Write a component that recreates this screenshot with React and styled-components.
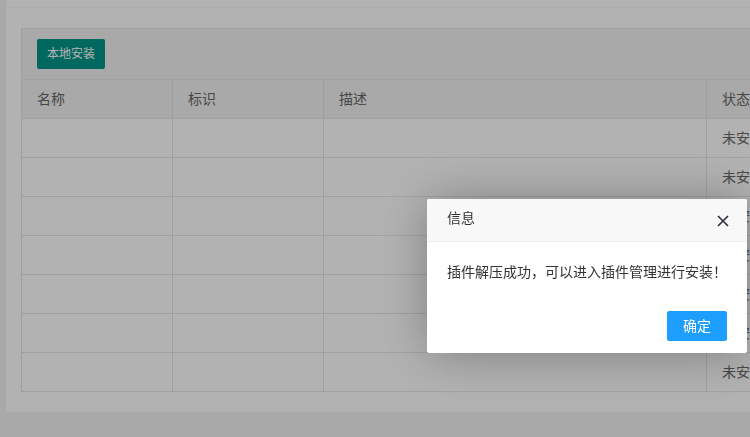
import React from "react";
import styled, { createGlobalStyle } from "styled-components";

const Global = createGlobalStyle`
  html, body { margin: 0; padding: 0; }
  body {
    background: #f2f2f2;
    font-family: "Helvetica Neue", Helvetica, "Noto Sans CJK SC", Arial, sans-serif;
    font-size: 14px;
    color: #333;
    overflow: hidden;
    width: 750px;
    height: 437px;
  }
`;

const Page = styled.div`
  padding: 0 0 0 6px;
  width: 1000px;
`;

const Card = styled.div`
  background: #fff;
  border-radius: 2px;
`;

const CardHead = styled.div`
  height: 7px;
  border-bottom: 1px solid #f6f6f6;
`;

const CardBody = styled.div`
  padding: 20px 15px;
`;

const TableBox = styled.div`
  border: 1px solid #e6e6e6;
`;

const Toolbar = styled.div`
  height: 30px;
  padding: 10px 15px;
  background: #f2f2f2;
  border-bottom: 1px solid #e6e6e6;
`;

const GreenButton = styled.button`
  display: block;
  height: 30px;
  padding: 0 10px;
  border: none;
  border-radius: 2px;
  background: #009688;
  color: #fff;
  font-family: inherit;
  font-size: 12px;
  line-height: 30px;
  cursor: pointer;
`;

const Grid = styled.div`
  display: grid;
  grid-template-columns: 150px 151px 383px 200px;
`;

const Cell = styled.div`
  box-sizing: border-box;
  padding: 9px 15px;
  line-height: 20px;
  color: #666;
  font-size: 14px;
  white-space: nowrap;
  overflow: hidden;
  background: ${(p) => (p.$head ? "#f2f2f2" : "#fff")};
  border-left: ${(p) => (p.$first ? "none" : "1px solid #e6e6e6")};
  border-top: ${(p) => (p.$top ? "none" : "1px solid #e6e6e6")};
  height: ${(p) => (p.$top ? "38px" : "39px")};
`;

const Shade = styled.div`
  position: fixed;
  inset: 0;
  background: rgba(0, 0, 0, 0.3);
`;

const Dialog = styled.div`
  position: fixed;
  left: 427px;
  top: 199px;
  width: 320px;
  background: #fff;
  border-radius: 2px;
  box-shadow: 1px 1px 50px rgba(0, 0, 0, 0.3);
`;

const DialogTitle = styled.div`
  height: 42px;
  line-height: 38px;
  padding: 0 80px 0 20px;
  border-bottom: 1px solid #eee;
  background: #f8f8f8;
  border-radius: 2px 2px 0 0;
  color: #333;
  font-size: 14px;
  position: relative;
`;

const Close = styled.svg`
  position: absolute;
  right: 18px;
  top: 16px;
  display: block;
`;

const DialogContent = styled.div`
  padding: 18px 20px 22px;
  line-height: 24px;
  font-size: 14px;
  color: #333;
`;

const DialogBtns = styled.div`
  display: flex;
  justify-content: flex-end;
  padding: 0 15px 12px;
`;

const BlueButton = styled.a`
  display: block;
  height: 28px;
  line-height: 28px;
  margin: 5px 5px 0;
  padding: 0 15px;
  border: 1px solid #1e9fff;
  background: #1e9fff;
  color: #fff;
  border-radius: 2px;
  font-size: 14px;
  cursor: pointer;
`;

const headers = ["名称", "标识", "描述", "状态"];

export default function App() {
  const rows = Array.from({ length: 7 });
  return (
    <>
      <Global />
      <Page>
        <Card>
          <CardHead />
          <CardBody>
            <TableBox>
              <Toolbar>
                <GreenButton>本地安装</GreenButton>
              </Toolbar>
              <Grid>
                {headers.map((h, i) => (
                  <Cell key={h} $head $top $first={i === 0}>
                    {h}
                  </Cell>
                ))}
                {rows.map((_, r) =>
                  [0, 1, 2, 3].map((c) => (
                    <Cell key={`${r}-${c}`} $first={c === 0}>
                      {c === 3 ? "未安装" : ""}
                    </Cell>
                  ))
                )}
              </Grid>
            </TableBox>
          </CardBody>
        </Card>
      </Page>
      <Shade />
      <Dialog>
        <DialogTitle>
          信息
          <Close width="12" height="12" viewBox="0 0 12 12">
            <path d="M1 1 L11 11 M11 1 L1 11" stroke="#2e2d3c" strokeWidth="1.6" />
          </Close>
        </DialogTitle>
        <DialogContent>插件解压成功，可以进入插件管理进行安装！</DialogContent>
        <DialogBtns>
          <BlueButton>确定</BlueButton>
        </DialogBtns>
      </Dialog>
    </>
  );
}
